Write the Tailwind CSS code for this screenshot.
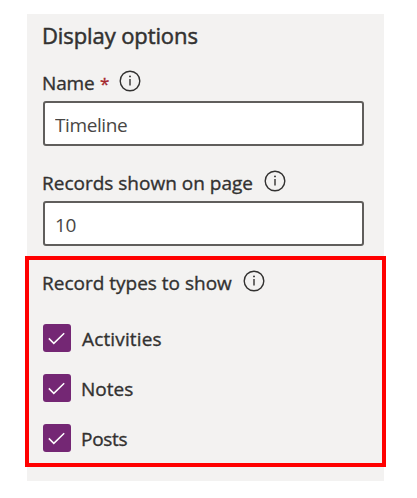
<!DOCTYPE html>
<html lang="en">
<head>
<meta charset="utf-8">
<title>Display options</title>
<script src="https://cdn.jsdelivr.net/npm/@tailwindcss/browser@4"></script>
</head>
<body class="bg-white font-['Open_Sans','Noto_Sans',sans-serif] text-[#323130]">
<svg class="hidden">
  <symbol id="info" viewBox="0 0 22 22"><circle cx="11" cy="11" r="9.8" fill="none" stroke="#323130" stroke-width="1.4"/><path d="M11 9v6.6" stroke="#323130" stroke-width="1.4"/><circle cx="11" cy="6.4" r=".95" fill="#323130"/></symbol>
  <symbol id="check" viewBox="0 0 28 28"><path d="M5.8 14.4l5 5L21.2 9.2" fill="none" stroke="#fff" stroke-width="1.5"/></symbol>
</svg>
<main class="ml-[27px] mt-[14px] h-[467px] w-[357px] bg-[#f3f2f1] whitespace-nowrap text-[19px] [-webkit-text-stroke:0.35px_currentColor]">
  <h1 class="h-[52px] pl-[15px] pt-[6px] text-[22px] leading-[30px] tracking-[-0.1px] [-webkit-text-stroke:0.5px_currentColor]">Display options</h1>
  <div class="h-[100px] px-4">
    <div class="flex h-[35px] items-start">
      <label for="name" class="-ml-px w-[53px] leading-[35px] tracking-[-0.15px]">Name</label><span class="ml-[5px] w-[9px] text-[17px] leading-[35px] text-[#a4262c]">*</span>
      <svg class="ml-[10px] mt-1 size-[22px]"><use href="#info"/></svg>
    </div>
    <input id="name" class="block h-[45px] w-[321px] rounded-[3px] border-2 border-[#605e5c] bg-white px-[10px] pt-[2px] text-[19px] tracking-[-0.4px] text-[#484644] [-webkit-text-stroke:0]" value="Timeline">
  </div>
  <div class="h-[90px] px-4">
    <div class="flex h-[35px] items-start">
      <label for="count" class="-ml-px leading-[35px]">Records shown on page</label>
      <svg class="ml-[11px] mt-1 size-[22px]"><use href="#info"/></svg>
    </div>
    <input id="count" class="block h-[45px] w-[321px] rounded-[3px] border-2 border-[#605e5c] bg-white px-[10px] pt-[2px] text-[19px] tracking-[-0.4px] text-[#484644] [-webkit-text-stroke:0]" value="10">
  </div>
  <section class="-mx-[2px] h-[211px] border-4 border-[#ff0000] px-[14px] pt-[6px]">
    <div class="flex h-[58px] items-start">
      <h2 class="-ml-px leading-[35px]">Record types to show</h2>
      <svg class="ml-[11px] mt-1 size-[22px]"><use href="#info"/></svg>
    </div>
    <div class="flex flex-col gap-[22px]">
      <div class="flex h-7 items-center gap-[11px]"><span class="size-7 rounded-[3px] bg-[#742774]"><svg class="size-7"><use href="#check"/></svg></span><span class="pt-[2px] tracking-[0.15px]">Activities</span></div>
      <div class="flex h-7 items-center gap-[11px]"><span class="size-7 rounded-[3px] bg-[#742774]"><svg class="size-7"><use href="#check"/></svg></span><span class="-ml-px pt-[2px]">Notes</span></div>
      <div class="flex h-7 items-center gap-[11px]"><span class="size-7 rounded-[3px] bg-[#742774]"><svg class="size-7"><use href="#check"/></svg></span><span class="-ml-px pt-[2px] tracking-[-0.3px]">Posts</span></div>
    </div>
  </section>
</main>
</body>
</html>
